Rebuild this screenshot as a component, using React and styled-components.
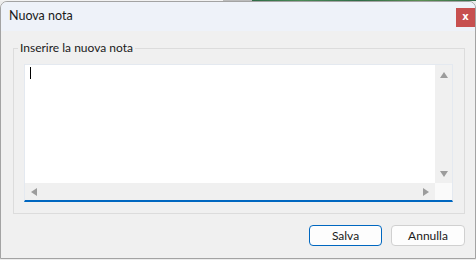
import React from "react";
import styled, { createGlobalStyle } from "styled-components";

const Global = createGlobalStyle`
  html, body { margin: 0; padding: 0; }
  body {
    width: 476px;
    height: 260px;
    overflow: hidden;
    background: #ececec;
    font-family: Lato, "Noto Sans", Arial, sans-serif;
  }
`;

const Desktop = styled.div`
  height: 1px;
  background: linear-gradient(
    to right,
    #f2f2f2 0px,
    #f2f2f2 223px,
    #bcbcbc 223px,
    #bcbcbc 252px,
    #2f6b47 252px,
    #4a8a56 300px,
    #2f6b47 360px,
    #5b8f52 420px,
    #2f6b47 476px
  );
`;

const Window = styled.div`
  box-sizing: border-box;
  width: 476px;
  height: 258px;
  border: 1px solid #a3a3a3;
  border-radius: 7px 7px 0 0;
  background: #f0f0f0;
  display: flex;
  flex-direction: column;
  overflow: hidden;
`;

const TitleBar = styled.div`
  height: 29px;
  flex: none;
  background: #eef2f9;
  display: flex;
  align-items: flex-start;
  justify-content: space-between;
  padding-left: 8px;
`;

const Title = styled.div`
  font-size: 12.5px;
  line-height: 16px;
  margin-top: 6px;
  color: #1a1a1a;
`;

const CloseButton = styled.div`
  width: 19px;
  height: 19px;
  margin-top: 6px;
  background: #c75050;
  color: #fff;
  font-family: "DejaVu Sans", sans-serif;
  font-weight: bold;
  font-size: 10px;
  line-height: 17px;
  text-align: center;
`;

const Body = styled.div`
  flex: 1;
  padding: 9px 10px 0 12px;
  display: flex;
  flex-direction: column;
`;

const Group = styled.fieldset`
  margin: 0;
  padding: 0;
  border: 1px solid #dcdcdc;
  min-width: 0;
`;

const Legend = styled.legend`
  margin-left: 4px;
  padding: 0 2px;
  font-size: 12px;
  line-height: 16px;
  color: #1a1a1a;
`;

const GroupContent = styled.div`
  padding: 8px 11px 11px 10px;
`;

const Editor = styled.div`
  box-sizing: border-box;
  height: 138px;
  border: 1px solid #e4e9f0;
  border-bottom: 2px solid #0067c0;
  display: grid;
  grid-template-columns: 1fr 17px;
  grid-template-rows: 1fr 17px;
  background: #fff;
`;

const TextArea = styled.div`
  background: #fff;
  padding: 2px 0 0 5px;
`;

const Caret = styled.div`
  width: 1px;
  height: 12px;
  background: #000;
`;

const VScroll = styled.div`
  background: #f0f0f0;
  display: flex;
  flex-direction: column;
  justify-content: space-between;
  align-items: center;
  padding: 7px 0 6px;
`;

const HScroll = styled.div`
  background: #f0f0f0;
  display: flex;
  justify-content: space-between;
  align-items: center;
  padding: 0 6px;
`;

const Corner = styled.div`
  background: #fafafa;
`;

const Arrow = styled.div`
  width: 0;
  height: 0;
  ${({ $dir }) =>
    $dir === "up"
      ? "border-left: 4px solid transparent; border-right: 4px solid transparent; border-bottom: 6px solid #9c9c9c;"
      : $dir === "down"
      ? "border-left: 4px solid transparent; border-right: 4px solid transparent; border-top: 6px solid #9c9c9c;"
      : $dir === "left"
      ? "border-top: 4px solid transparent; border-bottom: 4px solid transparent; border-right: 6px solid #9c9c9c;"
      : "border-top: 4px solid transparent; border-bottom: 4px solid transparent; border-left: 6px solid #9c9c9c;"}
`;

const Buttons = styled.div`
  display: flex;
  justify-content: flex-end;
  gap: 9px;
  margin-top: 11px;
`;

const Button = styled.button`
  box-sizing: border-box;
  width: ${({ $w }) => $w}px;
  height: 21px;
  border: 1px solid ${({ $primary }) => ($primary ? "#0067c0" : "#d0d0d0")};
  border-radius: 4px;
  background: #fdfdfd;
  font-family: Lato, "Noto Sans", Arial, sans-serif;
  font-size: 12px;
  line-height: 17px;
  color: #1a1a1a;
  padding: 0;
`;

export default function App() {
  return (
    <>
      <Global />
      <Desktop />
      <Window>
        <TitleBar>
          <Title>Nuova nota</Title>
          <CloseButton>x</CloseButton>
        </TitleBar>
        <Body>
          <Group>
            <Legend>Inserire la nuova nota</Legend>
            <GroupContent>
              <Editor>
                <TextArea>
                  <Caret />
                </TextArea>
                <VScroll>
                  <Arrow $dir="up" />
                  <Arrow $dir="down" />
                </VScroll>
                <HScroll>
                  <Arrow $dir="left" />
                  <Arrow $dir="right" />
                </HScroll>
                <Corner />
              </Editor>
            </GroupContent>
          </Group>
          <Buttons>
            <Button $primary $w={73}>Salva</Button>
            <Button $w={74}>Annulla</Button>
          </Buttons>
        </Body>
      </Window>
    </>
  );
}
